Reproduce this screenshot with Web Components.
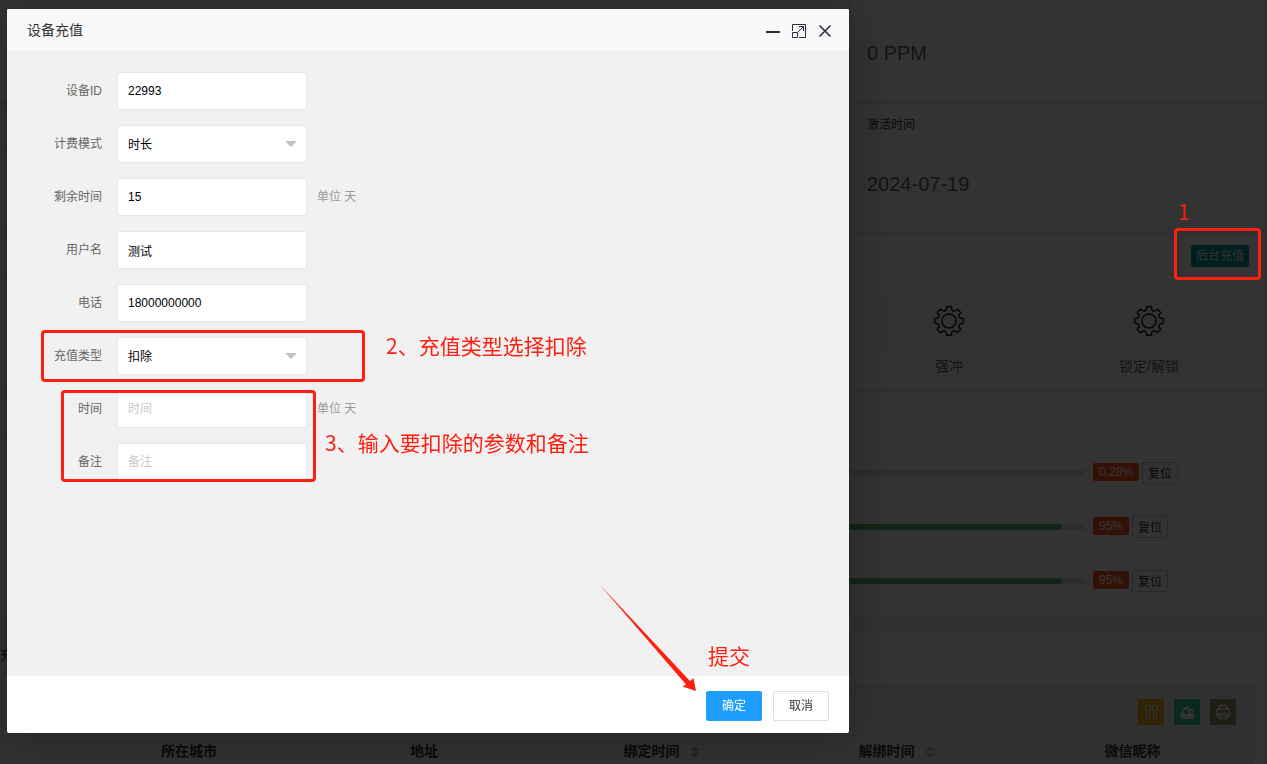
<!DOCTYPE html>
<html lang="zh-CN">
<head>
<meta charset="utf-8">
<title>设备充值</title>
<style>
html,body{height:100%;margin:0}
body{overflow:hidden;background:#f2f2f2;color:#333;font:12px/20px "Liberation Sans","Noto Sans CJK SC",sans-serif}
</style>
</head>
<body>
<device-page></device-page>
<page-shade></page-shade>
<recharge-dialog heading="设备充值">
  <form-field label="设备ID" value="22993"></form-field>
  <form-field label="计费模式" kind="select" value="时长"></form-field>
  <form-field label="剩余时间" value="15" unit="单位 天"></form-field>
  <form-field label="用户名" value="测试"></form-field>
  <form-field label="电话" value="18000000000"></form-field>
  <form-field label="充值类型" kind="select" value="扣除"></form-field>
  <form-field label="时间" hint="时间" unit="单位 天"></form-field>
  <form-field label="备注" hint="备注"></form-field>
</recharge-dialog>
<guide-marks></guide-marks>

<script>
const define = (name, render) => customElements.define(name, class extends HTMLElement {
  connectedCallback() {
    if (this.shadowRoot) return;
    this.attachShadow({mode: 'open'}).innerHTML = render(this);
  }
});
const attr = (el, name) => el.getAttribute(name) || '';

/* White panel with an optional title bar */
define('info-card', () => `
<style>
:host{display:block;background:#fff;border-radius:2px;box-shadow:0 1px 2px rgba(0,0,0,.05)}
header{box-sizing:border-box;height:var(--head,41px);padding:0 15px 0 var(--inset,15px);display:flex;align-items:center;justify-content:space-between;border-bottom:1px solid var(--rule,#f6f6f6)}
</style>
<header><slot name="title"></slot><slot name="action"></slot></header>
<slot></slot>`);

/* Eight-toothed gear outline */
const gearPath = (() => {
  let d = '';
  for (let k = 0; k < 8; k++) {
    const a = k * Math.PI / 4;
    const p = (x, y) => (x * Math.cos(a) - y * Math.sin(a)).toFixed(2) + ' ' + (x * Math.sin(a) + y * Math.cos(a)).toFixed(2);
    d += (k ? 'L' : 'M') + p(-3, -11) + 'L' + p(-2.3, -14.3) + 'L' + p(2.3, -14.3) + 'L' + p(3, -11) + 'Q' + p(4.1, -9.4) + ' ' + p(5.65, -9.9);
  }
  return d + 'Z';
})();
define('gear-action', el => `
<style>
:host{display:block;width:190px;text-align:center}
a{color:#666;text-decoration:none;font-size:14px;line-height:30px;display:block}
i{display:flex;height:60px;align-items:center;justify-content:center;background:#f8f8f8;border-radius:2px}
svg{width:32px;height:32px;fill:none;stroke:#222;stroke-width:1.5;stroke-linejoin:round}
</style>
<a href="#"><i><svg viewBox="-16 -16 32 32"><path d="${gearPath}"/><circle r="7"/></svg></i>${attr(el, 'label')}</a>`);

/* Filter life: bar, badge and reset button */
define('life-bar', el => `
<style>
:host{display:flex;align-items:center;height:22px}
.track{flex:1;height:6px;border-radius:3px;background:#e2e2e2;overflow:hidden;margin-right:8px}
.fill{height:6px;border-radius:3px;background:#5fb878}
.side{width:171px;display:flex;gap:3px;align-items:center}
b{font-weight:400;height:18px;line-height:18px;padding:0 6px;background:#ff5722;color:#fff;border-radius:2px;margin-bottom:2px}
button{box-sizing:border-box;height:22px;padding:2px 5px 0;font:inherit;line-height:18px;color:#333;background:#fff;border:1px solid #c9c9c9;border-radius:2px}
</style>
<div class="track" role="progressbar" aria-label="滤芯" aria-valuenow="${parseFloat(attr(el, 'value'))}"><div class="fill" style="width:${attr(el, 'fill')}"></div></div>
<div class="side"><b>${attr(el, 'value')}</b><button type="button">复位</button></div>`);

/* Binding record table with its toolbar */
define('record-table', () => {
  const sort = '<svg class="sort" viewBox="0 0 10 12"><path d="M5 0l5 5H0zM0 7h10l-5 5z"/></svg>';
  return `
<style>
:host{display:block;border:1px solid #e6e6e6;border-left:0;background:#f2f2f2}
.bar{box-sizing:border-box;height:50px;padding:0 17px;display:flex;align-items:center;justify-content:flex-end;gap:10px;border-bottom:1px solid #e6e6e6}
.bar button{width:26px;height:26px;margin-top:2px;padding:0;border:0;display:grid;place-items:center}
.bar svg{width:16px;height:16px;fill:none;stroke:#fff}
.c{background:#f0ae20}.e{background:#30c8a0}.p{background:#a09068}
table{width:100%;border-collapse:separate;border-spacing:0;table-layout:fixed}
th{box-sizing:border-box;height:28px;padding:2px 0 0;font-size:14px;line-height:20px;border-right:1px solid #e6e6e6;border-bottom:1px solid #ddd;text-align:center}
th:last-child{border-right:0}
.n{width:72px}.w{width:235px}
.sort{width:10px;height:12px;fill:#b2b2b2;margin-left:10px;vertical-align:-2px}
.s{padding-left:5px}
</style>
<div class="bar">
<button class="c" type="button" aria-label="筛选列"><svg viewBox="0 0 16 16"><path d="M2.500 1.500h5v5h-5zM9.500 1.500h5v5h-5zM3.500 8.500v6M6.500 8.500v6M10.500 8.500v6M13.500 8.500v6"/></svg></button>
<button class="e" type="button" aria-label="导出"><svg viewBox="0 0 16 16"><path fill="#fff" fill-rule="evenodd" stroke="none" d="M1 9h2V6l3-3h2V1l3 3-3 3V5L5 7v2l1 1h3V5h5v5h1v4l-1 1H3l-2-3zM11 7v2h2V7z"/></svg></button>
<button class="p" type="button" aria-label="打印"><svg viewBox="0 0 16 16"><path stroke-width="1.500" d="M4 5V2.500L5 1.500h6l1 1V5M4 12H2.500L1.500 11V6.500L3 5h10l1.500 1.500V11l-1 1H12M4 9.500h8V14l-.5.5h-7L4 14zM5.500 11.500h5"/></svg></button>
</div>
<table><thead><tr><th class="n"></th><th class="w">所在城市</th><th class="w">地址</th><th class="w s">绑定时间${sort}</th><th class="w s">解绑时间${sort}</th><th>微信昵称</th></tr></thead></table>`;
});

define('device-page', () => `
<style>
:host{display:block;min-height:100%;padding-right:3px;background:#f2f2f2}
.stats{display:grid;grid-template-columns:1fr 412px;gap:4px}
.stats info-card{height:126px}
.stats info-card.top{--head:15px;height:101px}
.num{padding:0 15px;font-size:20px;line-height:76px;color:#666}
.action{height:22px;margin-top:2px;padding:0 5px;border:0;border-radius:2px;background:#009688;color:#fff;font:inherit;line-height:22px}
.ops{margin-top:4px;height:155px}
.gears{display:flex;justify-content:flex-end;gap:10px;padding:15px 20px 0}
.life{margin-top:4px;height:223px}
.bars{display:grid;grid-template-columns:1fr 1fr;row-gap:32px;padding-top:27px}
.bars life-bar{grid-column:2}
.log{margin-top:16px;--head:42px;--inset:0px;--rule:#e6e6e6}
.tab{font-size:14px}
.body{padding:10px 10px 10px 0}
</style>
<div class="stats">
<info-card class="top"></info-card><info-card class="top"><div class="num">0 PPM</div></info-card>
<info-card></info-card><info-card><span slot="title">激活时间</span><div class="num">2024-07-19</div></info-card>
</div>
<info-card class="ops"><span slot="title"></span><button slot="action" class="action" type="button">后台充值</button>
<div class="gears"><gear-action label="强冲"></gear-action><gear-action label="锁定/解锁"></gear-action></div></info-card>
<info-card class="life"><div class="bars">
<life-bar value="0.28%" fill="0%"></life-bar><life-bar value="95%" fill="95%"></life-bar><life-bar value="95%" fill="95%"></life-bar>
</div></info-card>
<info-card class="log"><span slot="title" class="tab">充</span><div class="body"><record-table></record-table></div></info-card>`);

define('page-shade', () => `<style>:host{position:fixed;inset:0;background:rgba(0,0,0,.8)}</style>`);

/* One labelled row of the form */
define('form-field', el => {
  const control = attr(el, 'kind') === 'select'
    ? `<span class="pick"><select id="f"><option>${attr(el, 'value')}</option></select></span>`
    : `<input id="f" type="text" value="${attr(el, 'value')}" placeholder="${attr(el, 'hint')}">`;
  const unit = attr(el, 'unit');
  return `
<style>
:host{display:flex;align-items:center;height:38px}
label{width:95px;margin-right:15px;text-align:right;color:#666}
input,select{box-sizing:border-box;width:190px;height:38px;margin:0;padding:0 10px;border:1px solid #e6e6e6;border-radius:2px;background:#fff;color:#000;font:inherit;appearance:none;outline:0;display:block}
select{padding-top:2px}
input::placeholder{color:#c8c8c8;opacity:1}
.pick{display:grid;align-items:center}
.pick>*,.pick::after{grid-area:1/1}
.pick::after{content:"";justify-self:end;margin-right:10px;border:6px solid transparent;border-top-color:#c2c2c2;border-bottom:0;pointer-events:none}
.unit{margin-left:10px;color:#999}
</style>
<label for="f">${attr(el, 'label')}</label>${control}${unit ? `<span class="unit">${unit}</span>` : ''}`;
});

define('recharge-dialog', el => `
<style>
:host{position:fixed;inset:0;box-sizing:border-box;padding:9px 418px 31px 7px;display:flex}
section{flex:1;display:flex;flex-direction:column;border-radius:2px;background:#fff;box-shadow:1px 1px 50px rgba(0,0,0,.3)}
header{box-sizing:border-box;height:43px;padding:0 17px 0 20px;display:flex;align-items:center;gap:12px;background:#f8f8f8;border-bottom:1px solid #eee;border-radius:2px 2px 0 0}
h1{margin:0;flex:1;font-size:14px;font-weight:400;line-height:20px;color:#333}
header button{width:14px;height:14px;margin-top:2px;padding:0;border:0;background:none;display:block}
svg{display:block;width:14px;height:14px;fill:none;stroke:#2d2c3f}
form{flex:1;padding:20px 0;display:flex;flex-direction:column;gap:15px;background:#f1f1f1}
footer{padding:15px 20px 12px;display:flex;justify-content:flex-end;gap:11px}
footer button{box-sizing:border-box;width:56px;height:30px;padding:0;border:1px solid #dedede;border-radius:2px;background:#fff;color:#333;font:inherit}
footer .ok{background:#1e9fff;border-color:#1e9fff;color:#fff}
</style>
<section role="dialog" aria-label="${attr(el, 'heading')}">
<header><h1>${attr(el, 'heading')}</h1>
<button type="button" aria-label="最小化"><svg viewBox="0 0 14 14"><path stroke-width="2" d="M0 8h14"/></svg></button>
<button type="button" aria-label="最大化"><svg viewBox="0 0 14 14"><path d="M.5 7V.5h13v13H7M.5 8.500h5v5h-5zM6 8l5.500-5.500M7 2.500h4.500V7"/></svg></button>
<button type="button" aria-label="关闭"><svg viewBox="0 0 14 14"><path stroke-width="1.600" d="M1.500 1.500l11 11M12.500 1.500l-11 11"/></svg></button>
</header>
<form><slot></slot></form>
<footer><button class="ok" type="button">确定</button><button type="button">取消</button></footer>
</section>`);

/* Red step marks that lie over the page */
define('guide-marks', () => `
<style>
:host{position:fixed;inset:0;pointer-events:none;color:#ff1f10;font:21px/30px "Noto Sans CJK SC",sans-serif}
div,span,svg{position:absolute;box-sizing:border-box}
div{border:3px solid #ff1f10;border-radius:4px}
span{white-space:nowrap}
.a{right:6px;top:228px;width:87px;height:52px}
.b{left:41px;top:330px;width:324px;height:52px}
.c{left:61px;top:390px;width:255px;height:92px}
.n1{right:77px;top:196px}
.n2{left:386px;top:330px}
.n3{left:325px;top:427px}
.n4{left:708px;top:640px}
svg{left:597px;top:582px;width:100px;height:110px}
</style>
<div class="a"></div><div class="b"></div><div class="c"></div>
<span class="n1">1</span><span class="n2">2、充值类型选择扣除</span><span class="n3">3、输入要扣除的参数和备注</span><span class="n4">提交</span>
<svg viewBox="597 582 100 110"><path fill="#ff1f10" d="M599.500 584.500L690 681L693.500 678L696 691L682.500 686.500L686 684.500Z"/></svg>`);
</script>
</body>
</html>
